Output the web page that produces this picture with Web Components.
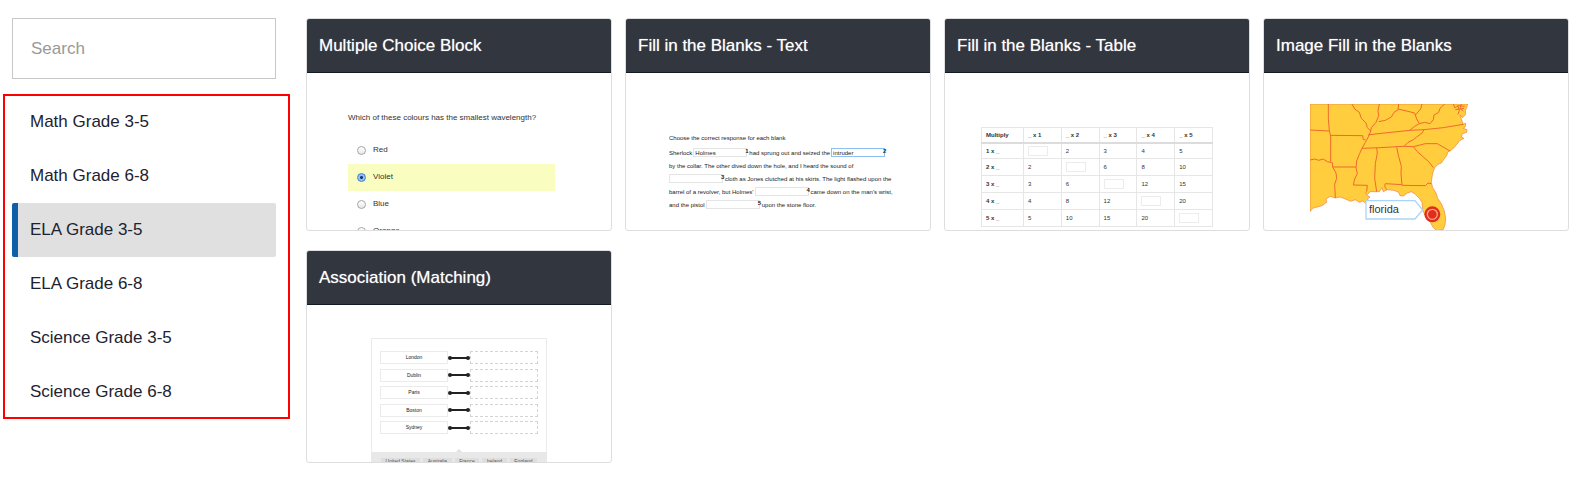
<!DOCTYPE html>
<html lang="en">
<head>
<meta charset="utf-8">
<title>Question templates</title>
<style>
  body { margin: 0; background: #fff; color: #1d2330; font: 17px/24px "Liberation Sans", Arial, sans-serif; }
</style>
</head>
<body>
<template-library></template-library>

<script>
const define = (name, html, setup) => {
  const template = document.createElement('template');
  template.innerHTML = html;
  customElements.define(name, class extends HTMLElement {
    constructor() {
      super();
      this.attachShadow({ mode: 'open' }).append(template.content.cloneNode(true));
      if (setup) setup(this, this.shadowRoot);
    }
  });
};

define('search-box', `
  <style>
    :host { display: block; }
    input { display: block; box-sizing: border-box; width: 100%; height: 61px; margin: 0; padding: 0 18px;
      border: 1px solid #c8c8c8; border-radius: 0; background: #fff; color: inherit; font: inherit; outline: 0; }
    input::placeholder { color: #999; opacity: 1; }
  </style>
  <input type="text" placeholder="Search" aria-label="Search">
`);

define('nav-item', `
  <style>
    :host { display: block; }
    a { display: block; padding: 15px 12px; border-left: 6px solid transparent; border-radius: 2px;
      color: inherit; text-decoration: none; }
    :host([selected]) a { border-left-color: #0f5ea8; background: #e0e0e0; }
  </style>
  <a href="#"><slot></slot></a>
`);

define('nav-list', `
  <style>
    :host { display: block; padding: 1px 14px 0 9px; outline: 2px solid #f00; outline-offset: -2px; }
  </style>
  <nav aria-label="Subjects"><slot></slot></nav>
`);

define('template-card', `
  <style>
    :host { display: block; border: 1px solid #dedede; border-radius: 3px; overflow: hidden; min-width: 0; }
    h2 { margin: 0; padding: 15px 12px 14px; border-bottom: 1px solid #141a24; background: #32363e;
      color: #fff; font: inherit; text-shadow: 0 0 1px rgba(255, 255, 255, .6); }
    .preview { display: flex; justify-content: center; height: 157px; overflow: hidden; }
  </style>
  <h2><slot name="title"></slot></h2>
  <div class="preview"><slot></slot></div>
`);

define('choice-preview', `
  <style>
    :host { display: block; width: 222px; padding: 40px 0 0; font-size: 8px; line-height: 10px; color: #333; }
    fieldset { margin: 0; padding: 0; border: 0; width: 207px; }
    legend { padding: 0; margin-bottom: 14px; white-space: nowrap; }
    .option { display: flex; align-items: center; gap: 7px; height: 27px; padding-left: 9px; }
    .chosen { background: #fafdc0; }
    input { appearance: none; box-sizing: border-box; width: 9px; height: 9px; margin: 0; border: 1px solid #a5a5a5;
      border-radius: 50%; background: linear-gradient(#fff, #e8e8e8); }
    input:checked { border-color: #4a7fc8; background: radial-gradient(circle, #163a6c 0 1px, #8fc0f5 2px 4px); }
    label { margin-top: -2px; }
  </style>
  <fieldset>
    <legend>Which of these colours has the smallest wavelength?</legend>
    <div class="option"><input type="radio" name="c" id="red"><label for="red">Red</label></div>
    <div class="option chosen"><input type="radio" name="c" id="violet" checked><label for="violet">Violet</label></div>
    <div class="option"><input type="radio" name="c" id="blue"><label for="blue">Blue</label></div>
    <div class="option"><input type="radio" name="c" id="orange"><label for="orange">Orange</label></div>
  </fieldset>
`);

define('blank-field', `
  <style>
    :host { display: inline-flex; align-items: center; }
    input { box-sizing: border-box; width: 54px; height: 9px; margin: 0; padding: 0 1px; border: 1px solid #e4e4e4;
      background: #fff; color: inherit; font: inherit; outline: 0; }
    :host([active]) input { border-color: #8cc0f5; }
    b { width: 4px; margin-left: -2px; align-self: flex-start; line-height: 6px; }
  </style>
  <input type="text"><b></b>
`, (host, root) => {
  const input = root.querySelector('input');
  input.value = host.getAttribute('value') || '';
  input.setAttribute('aria-label', 'Blank ' + host.getAttribute('n'));
  root.querySelector('b').textContent = host.getAttribute('n');
});

define('text-preview', `
  <style>
    :host { display: block; width: 218px; padding-top: 59px; font-size: 6px; line-height: 12px; color: #222; }
    p { margin: 0 0 2px; }
    div { display: flex; align-items: center; height: 13px; white-space: nowrap; }
    span + blank-field { margin-left: 1px; }
  </style>
  <p>Choose the correct response for each blank</p>
  <div><span>Sherlock</span><blank-field n="1" value="Holmes"></blank-field><span>had sprung out and seized the</span><blank-field n="2" value="intruder" active></blank-field></div>
  <div>by the collar. The other dived down the hole, and I heard the sound of</div>
  <div><blank-field n="3"></blank-field><span>cloth as Jones clutched at his skirts. The light flashed upon the</span></div>
  <div><span>barrel of a revolver, but Holmes'</span><blank-field n="4"></blank-field><span>came down on the man's wrist,</span></div>
  <div><span>and the pistol</span><blank-field n="5"></blank-field><span>upon the stone floor.</span></div>
`);

define('table-preview', `
  <style>
    :host { display: block; width: 232px; padding-top: 54px; font-size: 6px; line-height: 8px; color: #333; }
    table { width: 100%; border-collapse: collapse; table-layout: fixed; }
    th, td { box-sizing: border-box; height: 17px; padding: 0 4px; border: 1px solid #e6e6e6; text-align: left; }
    thead th { height: 15px; border-bottom: 2px solid #dcdcdc; }
    tbody tr:first-child > * { height: 16px; }
    col:first-child { width: 42px; }
    input { display: block; box-sizing: border-box; width: 20px; height: 10px; margin: 0; padding: 0;
      border: 1px solid #ececec; background: #fff; font: inherit; }
  </style>
  <table>
    <colgroup><col><col><col><col><col><col></colgroup>
    <thead><tr><th>Multiply</th></tr></thead>
    <tbody></tbody>
  </table>
`, (host, root) => {
  const factors = [1, 2, 3, 4, 5];
  const head = root.querySelector('thead tr');
  const body = root.querySelector('tbody');
  for (const n of factors) {
    head.insertAdjacentHTML('beforeend', `<th>_ x ${n}</th>`);
    const cells = factors.map(m => m === n
      ? `<td><input type="text" aria-label="${n} times ${m}"></td>` : `<td>${n * m}</td>`).join('');
    body.insertAdjacentHTML('beforeend', `<tr><th>${n} x _</th>${cells}</tr>`);
  }
});

define('map-preview', `
  <style>
    :host { display: block; position: relative; width: 212px; padding-top: 31px; }
    svg { display: block; width: 160px; height: 127px; }
    input { position: absolute; left: 59px; top: 129px; width: 44px; height: 14px; padding: 0; border: 0;
      background: none; color: #333; font: 11px/14px "Liberation Sans", Arial, sans-serif; outline: 0; }
  </style>
  <svg viewBox="30 27 480 381" aria-hidden="true">
    <path fill="#ffcd3e" stroke="#f0813c" stroke-width="2" stroke-linejoin="round" d="M30 27H503L500 38L496 48L497 58L488 68L480 60L484 72L490 88L497 84L496 95L490 100L501 104L500 112L487 116L484 126L492 130L480 136L472 146L462 158L450 168L444 170L440 182L432 192L424 204L414 208L404 218L399 232L396 246L394 262L398 278L408 294L413 310L424 326L433 348L437 370L435 390L430 403L412 408L400 398L391 382L378 366L368 346L366 322L358 310L346 298L334 290L322 294L310 303L300 302L296 292L282 286L262 284L250 290L246 278L238 290L210 290L203 298L196 292L200 300L210 306L202 312L210 320L196 324L188 318L178 322L166 314L152 319L136 312L120 306L106 309L90 304L78 312L80 322L66 332L48 337L38 340L30 350Z"/>
    <g fill="none" stroke="#ef6a2c" stroke-width="3" stroke-linejoin="round">
      <path d="M85 27V70L88 106L92 124V200M30 105L88 108M90 121L188 122L190 134H196M30 195L44 192L56 196L70 192L82 200L97 203L98 216L108 234L110 250L104 268L106 309M98 216H168M156 27L164 42L178 52L184 70L198 84L202 98L212 108L206 124L196 142L186 160L178 178L170 198L168 218L172 236L164 252L160 270L202 271L200 290"/>
      <path d="M238 27L234 48L236 62L228 82L214 98L212 108M236 80L256 76L274 66L282 52L294 44L296 27M294 42L320 48L344 54L350 72L358 86L374 82L390 86L400 74L402 60L416 52L420 40L434 27M346 60L362 42L366 27M358 86L344 94L330 105"/>
      <path d="M204 120L234 116L330 106L372 104L430 98L490 88M186 160L240 158L310 154L340 155L376 146L412 146L450 168M372 104L366 114L350 126L340 134L324 142L312 154M230 159L232 174L226 206L224 250L230 290M290 157L296 184L304 214L303 236L306 271L376 272L384 264L394 266M306 269L256 266L254 274L260 284M340 155L352 170L368 184L386 200L400 218M460 27L464 38L474 34L478 46L474 58M484 27L480 40L490 48M466 44L492 40M472 32L494 34"/>
    </g>
    <path fill="#fff" stroke="#a9d6f8" stroke-width="4" d="M198 317H345L368 345L345 372H198Z"/>
    <circle cx="397" cy="358" r="24" fill="#df2f1b"/>
    <circle cx="397" cy="358" r="15" fill="none" stroke="#ffa38a" stroke-width="4"/>
  </svg>
  <input type="text" value="florida" aria-label="State name">
`);

define('match-row', `
  <style>
    :host { display: flex; align-items: center; height: 13px; }
    span, i { flex: 1; box-sizing: border-box; height: 13px; }
    span { border: 1px solid #ebebeb; text-align: center; }
    i { border: 1px dashed #d4d4d4; }
    svg { width: 22px; height: 4px; }
  </style>
  <span><slot></slot></span>
  <svg viewBox="0 0 22 4" aria-hidden="true"><path d="M2 2H20" stroke="#222" stroke-width="2"/><circle cx="2" cy="2" r="2" fill="#222"/><circle cx="20" cy="2" r="2" fill="#222"/></svg>
  <i></i>
`);

define('match-preview', `
  <style>
    :host { display: block; width: 176px; padding-top: 33px; font-size: 5px; line-height: 11px; color: #222; }
    .board { display: flex; flex-direction: column; justify-content: space-between; box-sizing: border-box;
      height: 114px; padding: 12px 8px 18px; border: 1px solid #ebebeb; border-bottom: 0; }
    .answers { position: relative; display: flex; gap: 3px; padding: 6px 10px; background: #e8e8e8; }
    .answers::before { content: ""; position: absolute; left: 85px; top: -3px; border: solid transparent;
      border-width: 0 3px 3px; border-bottom-color: #e0e0e0; }
    .answers span { flex: 1 0 auto; background: #dedede; text-align: center; color: #555; line-height: 7px; }
  </style>
  <div class="board">
    <match-row>London</match-row>
    <match-row>Dublin</match-row>
    <match-row>Paris</match-row>
    <match-row>Boston</match-row>
    <match-row>Sydney</match-row>
  </div>
  <div class="answers"><span>United States</span><span>Australia</span><span>France</span><span>Ireland</span><span>England</span></div>
`);

define('template-library', `
  <style>
    :host { display: flex; align-items: flex-start; gap: 16px; padding: 18px 22px 20px 3px; }
    aside { flex: none; width: 287px; }
    search-box { margin: 0 14px 15px 9px; }
    main { flex: 1; min-width: 0; display: grid; grid-template-columns: repeat(4, minmax(0, 1fr)); gap: 19px 13px; }
  </style>
  <aside>
    <search-box></search-box>
    <nav-list>
      <nav-item>Math Grade 3-5</nav-item>
      <nav-item>Math Grade 6-8</nav-item>
      <nav-item selected>ELA Grade 3-5</nav-item>
      <nav-item>ELA Grade 6-8</nav-item>
      <nav-item>Science Grade 3-5</nav-item>
      <nav-item>Science Grade 6-8</nav-item>
    </nav-list>
  </aside>
  <main>
    <template-card><span slot="title">Multiple Choice Block</span><choice-preview></choice-preview></template-card>
    <template-card><span slot="title">Fill in the Blanks - Text</span><text-preview></text-preview></template-card>
    <template-card><span slot="title">Fill in the Blanks - Table</span><table-preview></table-preview></template-card>
    <template-card><span slot="title">Image Fill in the Blanks</span><map-preview></map-preview></template-card>
    <template-card><span slot="title">Association (Matching)</span><match-preview></match-preview></template-card>
  </main>
`);
</script>
</body>
</html>
